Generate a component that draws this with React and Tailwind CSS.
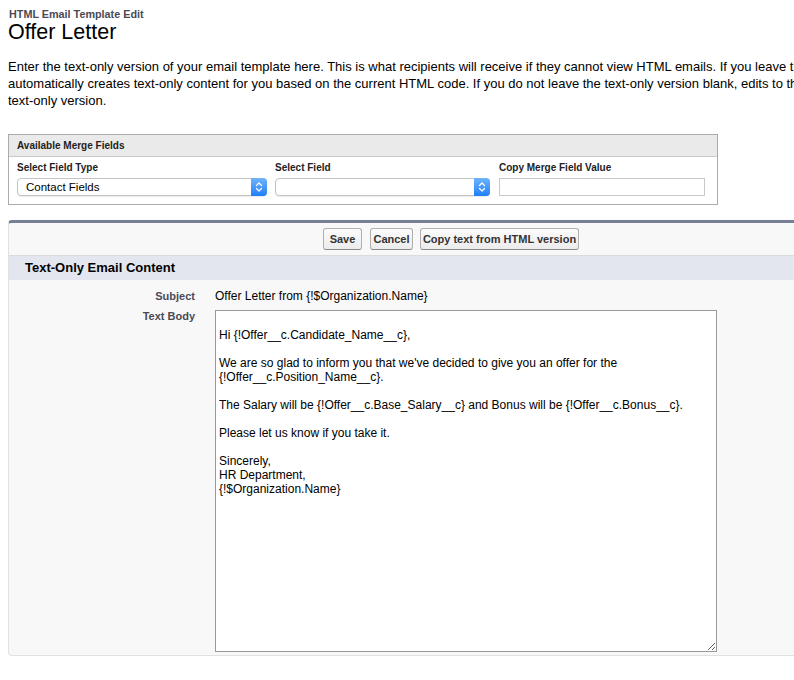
import React from "react";

const bodyText =
  "\nHi {!Offer__c.Candidate_Name__c},\n\nWe are so glad to inform you that we've decided to give you an offer for the\n{!Offer__c.Position_Name__c}.\n\nThe Salary will be {!Offer__c.Base_Salary__c} and Bonus will be {!Offer__c.Bonus__c}.\n\nPlease let us know if you take it.\n\nSincerely,\nHR Department,\n{!$Organization.Name}";

function MacSelect({ value, width }) {
  return (
    <div
      className={`flex h-[18px] ${width} rounded-[4px] border border-[#c4c4c4] bg-white shadow-[0_1px_1px_rgba(0,0,0,0.08)]`}
    >
      <div className="flex-1 pl-[8px] text-[11.5px] leading-[16px] text-black whitespace-nowrap overflow-hidden">
        {value}
      </div>
      <div className="-my-px -mr-px flex w-[16px] items-center justify-center rounded-r-[4px] bg-gradient-to-b from-[#6db4fb] to-[#1b7ff9]">
        <svg width="8" height="12" viewBox="0 0 8 12" fill="none">
          <path d="M1.5 4.5 L4 2 L6.5 4.5" stroke="white" strokeWidth="1.3" strokeLinecap="round" strokeLinejoin="round" />
          <path d="M1.5 7.5 L4 10 L6.5 7.5" stroke="white" strokeWidth="1.3" strokeLinecap="round" strokeLinejoin="round" />
        </svg>
      </div>
    </div>
  );
}

function Btn({ children, width }) {
  return (
    <div
      className={`flex h-[22px] ${width} items-center justify-center rounded-[3px] border border-[#b0b0b0] border-b-[#8a8a8a] bg-gradient-to-b from-[#fbfbfb] to-[#ececec] text-[11px] font-bold text-[#333] whitespace-nowrap`}
    >
      {children}
    </div>
  );
}

export default function App() {
  return (
    <div className="h-[680px] w-[794px] overflow-hidden bg-white font-['Liberation_Sans',Arial,sans-serif] text-black">
      <div className="pl-[8px] pt-[8px]">
        <div className="pl-px text-[10.8px] font-bold leading-[12px] text-[#4a4a56]">
          HTML Email Template Edit
        </div>
        <h1 className="text-[21.5px] leading-[24px] font-normal">Offer Letter</h1>
        <div className="mt-[14px] text-[13px] leading-[17px] whitespace-nowrap">
          <div>
            Enter the text-only version of your email template here. This is what recipients will receive if they cannot view HTML emails. If you leave the text-only version blank, Salesforce
          </div>
          <div>
            automatically creates text-only content for you based on the current HTML code. If you do not leave the text-only version blank, edits to the HTML version are not reflected in the
          </div>
          <div>text-only version.</div>
        </div>

        {/* Available Merge Fields */}
        <div className="mt-[25px] w-[710px] border border-[#ababab]">
          <div className="h-[22px] border-b border-[#c9c9c9] bg-[#eaeaea] pl-[8px] text-[10px] font-bold leading-[22px] text-[#222]">
            Available Merge Fields
          </div>
          <div className="flex pl-[8px] pt-[5px] pb-[8px]">
            <div className="w-[258px]">
              <div className="text-[10px] font-bold leading-[12px] text-[#222]">Select Field Type</div>
              <div className="mt-[4px]">
                <MacSelect value="Contact Fields" width="w-[250px]" />
              </div>
            </div>
            <div className="w-[224px]">
              <div className="text-[10px] font-bold leading-[12px] text-[#222]">Select Field</div>
              <div className="mt-[4px]">
                <MacSelect value="" width="w-[215px]" />
              </div>
            </div>
            <div className="w-[206px]">
              <div className="text-[10px] font-bold leading-[12px] text-[#222]">Copy Merge Field Value</div>
              <div className="mt-[4px] h-[18px] w-[206px] border border-[#c8c8c8] bg-white" />
            </div>
          </div>
        </div>

        {/* Main panel */}
        <div className="mt-[15px] w-[886px] rounded-t-[4px] rounded-b-[4px] border border-t-[3px] border-[#e1e1e1] border-t-[#767f96] bg-[#f8f8f8]">
          <div className="flex justify-center gap-[8px] border-b border-[#dbdbdb] pt-[5px] pb-[5px]">
            <Btn width="w-[39px]">Save</Btn>
            <Btn width="w-[43px]">Cancel</Btn>
            <div className="-ml-px">
              <Btn width="w-[159px]">Copy text from HTML version</Btn>
            </div>
          </div>
          <div className="h-[24px] bg-[#e3e6ee] pl-[16px] text-[13px] font-bold leading-[24px] text-black">
            Text-Only Email Content
          </div>
          <div className="pt-[8px] pb-[3px]">
            <div className="flex items-center">
              <div className="w-[186px] text-right text-[11px] font-bold leading-[16px] text-[#4a4a56]">Subject</div>
              <div className="ml-[20px] text-[12px] leading-[16px]">Offer Letter from {"{!$Organization.Name}"}</div>
            </div>
            <div className="mt-[6px] flex items-start">
              <div className="w-[186px] text-right text-[11px] font-bold leading-[13px] text-[#4a4a56]">Text Body</div>
              <textarea
                readOnly
                defaultValue={bodyText}
                className="ml-[20px] block h-[342px] w-[502px] border border-[#999] bg-white px-[3px] pt-[3px] font-['Liberation_Sans',Arial,sans-serif] text-[12px] leading-[14px] text-black outline-none"
              />
            </div>
          </div>
        </div>
      </div>
    </div>
  );
}
